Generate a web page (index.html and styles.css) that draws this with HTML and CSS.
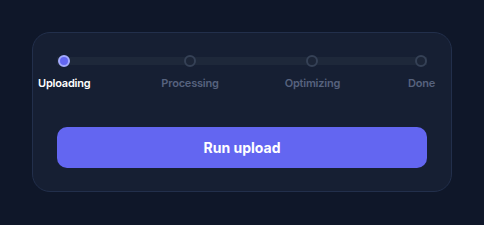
FILE: index.html
```html
<!DOCTYPE html>
<html lang="en">
<head>
    <meta charset="UTF-8">
    <meta name="viewport" content="width=device-width, initial-scale=1.0">
    <title>Upload progress</title>
    <link rel="stylesheet" href="styles.css">
</head>
<body>
    <div class="card">
        <!-- progress steps -->
        <div class="steps">
            <div class="track"></div>
            <div class="step active">
                <div class="step-inner"><span class="dot"></span><span class="label">Uploading</span></div>
            </div>
            <div class="step">
                <div class="step-inner"><span class="dot"></span><span class="label">Processing</span></div>
            </div>
            <div class="step">
                <div class="step-inner"><span class="dot"></span><span class="label">Optimizing</span></div>
            </div>
            <div class="step last">
                <div class="step-inner"><span class="dot"></span><span class="label">Done</span></div>
            </div>
        </div>

        <button class="btn" id="runBtn">Run upload</button>
    </div>
</body>
</html>
```

FILE: styles.css
```css
body {
    margin: 0;
    padding: 32px;
    background-color: #0f1729;
    font-family: Inter, "Noto Sans", Arial, sans-serif;
}
.card {
    width: 420px;
    height: 160px;
    box-sizing: border-box;
    background: #161f33;
    border: 1px solid #222f4b;
    border-radius: 18px;
    padding: 22px 24px 0;
}
.steps {
    position: relative;
    display: flex;
    margin: 0 -8px 0 -19px;
}
.track {
    position: absolute;
    left: 19px;
    right: 8px;
    top: 2px;
    height: 8px;
    background: #1e283a;
}
.step {
    flex: 1;
    display: flex;
    align-items: flex-start;
    position: relative;
}
.step.last {
    flex: none;
}
.step-inner {
    display: flex;
    flex-direction: column;
    align-items: center;
    gap: 9px;
}
.dot {
    display: block;
    width: 12px;
    height: 12px;
    box-sizing: border-box;
    border-radius: 50%;
    border: 2px solid #354156;
    background: #1c2537;
}
.step.active .dot {
    border-color: #a3aafd;
    background: #6366f1;
}
.label {
    font-size: 11px;
    line-height: 14px;
    font-weight: 600;
    letter-spacing: -0.2px;
    color: #56627e;
    white-space: nowrap;
}
.step.active .label {
    color: #ffffff;
}
.btn {
    display: block;
    width: 100%;
    height: 41px;
    margin-top: 37px;
    border: none;
    border-radius: 10px;
    background-color: #6366f1;
    color: #ffffff;
    font-family: inherit;
    font-size: 14px;
    font-weight: 700;
    cursor: pointer;
}
.btn:hover {
    background-color: #5a5de8;
}
```
